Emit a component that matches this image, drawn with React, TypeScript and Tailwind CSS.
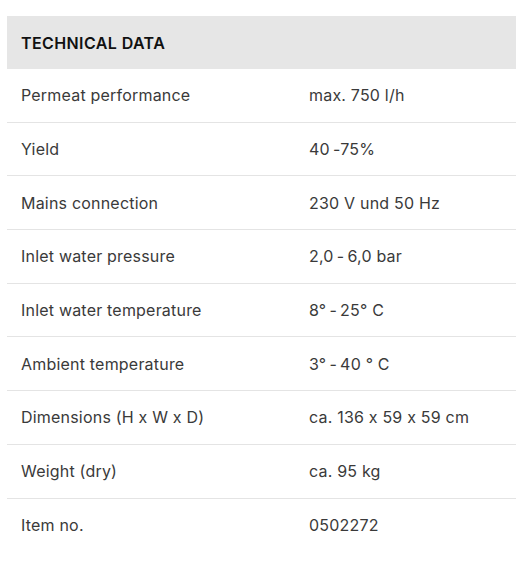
import React from "react";

interface SpecRow {
  label: string;
  value: string;
}

const rows: SpecRow[] = [
  { label: "Permeat performance", value: "max. 750 l/h" },
  { label: "Yield", value: "40\u2009-75%" },
  { label: "Mains connection", value: "230 V und 50 Hz" },
  { label: "Inlet water pressure", value: "2,0\u2009-\u20096,0 bar" },
  { label: "Inlet water temperature", value: "8°\u2009-\u200925° C" },
  { label: "Ambient temperature", value: "3°\u2009-\u200940 ° C" },
  { label: "Dimensions (H x W x D)", value: "ca. 136 x 59 x 59 cm" },
  { label: "Weight (dry)", value: "ca. 95 kg" },
  { label: "Item no.", value: "0502272" },
];

const App: React.FC = () => {
  return (
    <div className="min-h-[577px] bg-white pt-4 pl-[7px] font-['Inter','Liberation_Sans',sans-serif] [font-feature-settings:'calt'_0]">
      <div className="flex h-[53px] items-center bg-[#e6e6e6] pl-[14px]">
        <h2 className="text-[16px] font-semibold tracking-[0.4px] text-[#111]">
          TECHNICAL DATA
        </h2>
      </div>
      {rows.map((row, i) => (
        <div
          key={row.label}
          className={`box-border flex h-[53.7px] items-center text-[16px] tracking-[0.2px] text-[#3a3a3a] ${
            i < rows.length - 1 ? "border-b border-[#e4e4e4]" : ""
          }`}
        >
          <div className="w-[302px] pl-[14px]">{row.label}</div>
          <div>{row.value}</div>
        </div>
      ))}
    </div>
  );
};

export default App;
